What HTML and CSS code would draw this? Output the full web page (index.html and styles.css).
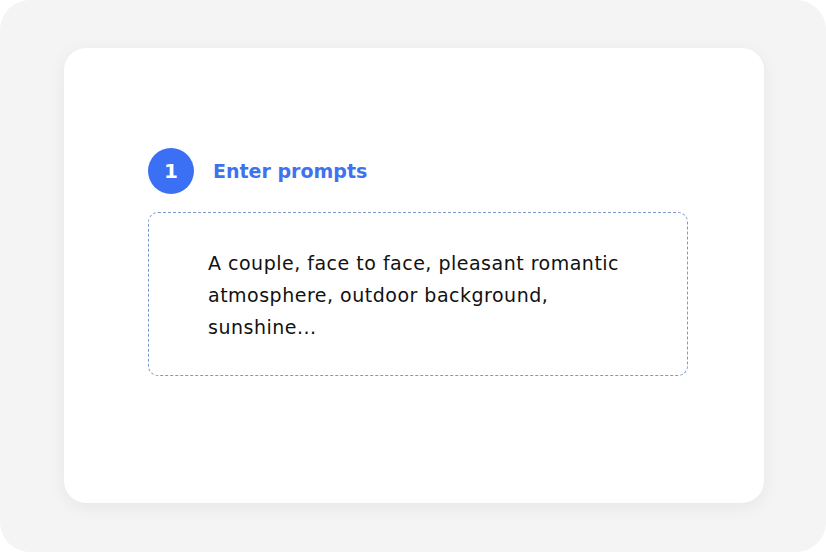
FILE: index.html
```html
<!DOCTYPE html>
<html lang="en">
<head>
<meta charset="utf-8">
<title>Enter prompts</title>
<link rel="stylesheet" href="styles.css">
</head>
<body>
<div class="frame">
  <div class="card">
    <div class="step">
      <div class="step-num">1</div>
      <div class="step-title">Enter prompts</div>
    </div>
    <div class="prompt-box">
      <p class="prompt-text">A couple, face to face, pleasant romantic atmosphere, outdoor background, sunshine...</p>
    </div>
  </div>
</div>
</body>
</html>
```
FILE: styles.css
```css
* { box-sizing: border-box; }
html, body {
  margin: 0;
  padding: 0;
  background: #ffffff;
}
body {
  width: 826px;
  height: 552px;
  font-family: "DejaVu Sans", Inter, sans-serif;
}
.frame {
  width: 826px;
  height: 552px;
  background: #f4f4f4;
  border-radius: 30px;
  padding: 48px 62px 49px 64px;
}
.card {
  width: 700px;
  height: 455px;
  background: #ffffff;
  border-radius: 22px;
  box-shadow: 0 4px 18px rgba(0, 0, 0, 0.06);
  padding: 100px 76px 0 84px;
}
.step {
  display: flex;
  align-items: center;
  gap: 19px;
  height: 46px;
}
.step-num {
  width: 46px;
  height: 46px;
  border-radius: 50%;
  background: #3b6ff4;
  color: #ffffff;
  font-weight: 700;
  font-size: 20px;
  display: flex;
  align-items: center;
  justify-content: center;
}
.step-title {
  color: #3f72ee;
  font-weight: 700;
  font-size: 19px;
}
.prompt-box {
  margin-top: 18px;
  width: 540px;
  height: 164px;
  border: 1px dashed #7b98d0;
  border-radius: 10px;
  padding: 34px 0 0 59px;
}
.prompt-text {
  margin: 0;
  width: 440px;
  font-size: 19px;
  letter-spacing: 0.5px;
  line-height: 32px;
  color: #111111;
}
```
